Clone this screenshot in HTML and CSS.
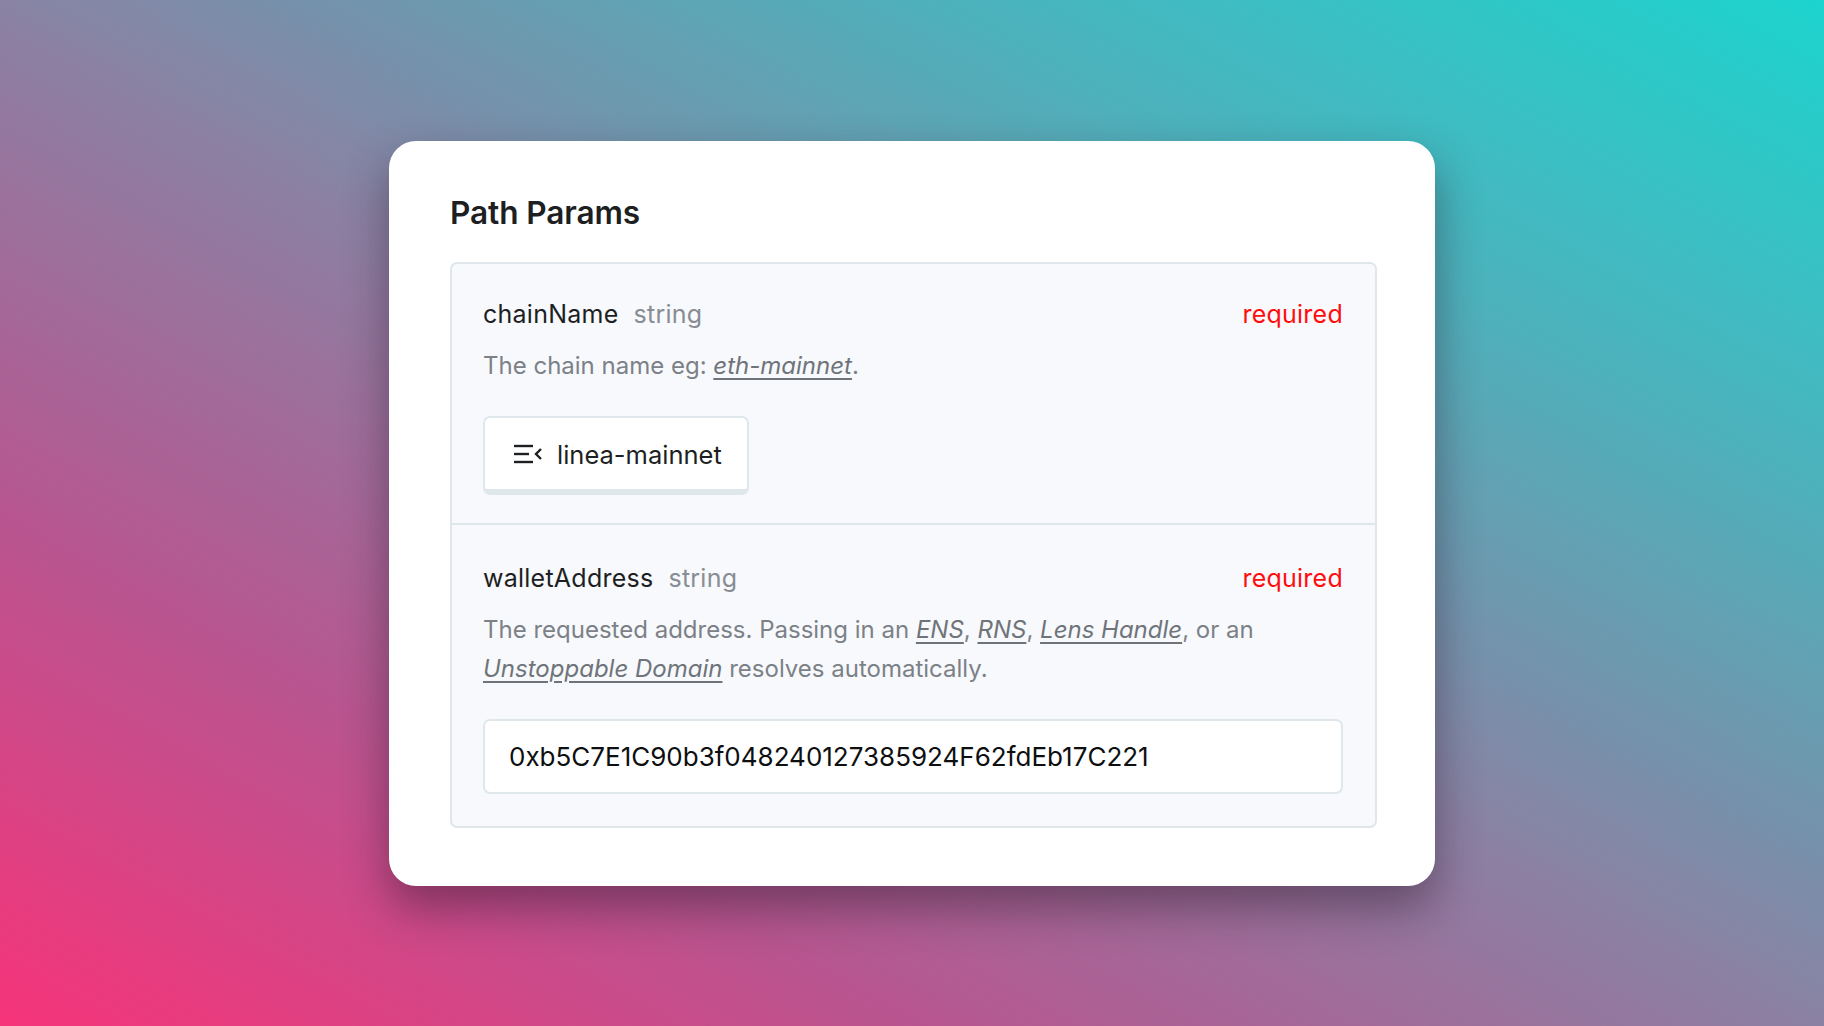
FILE: index.html
```html
<!DOCTYPE html>
<html lang="en">
<head>
<meta charset="utf-8">
<title>Path Params</title>
<link rel="stylesheet" href="styles.css">
</head>
<body>
<div class="stage">
  <section class="card">
    <h2 class="title">Path Params</h2>
    <div class="params">
      <div class="param">
        <div class="param-head">
          <div class="param-name">chainName<span class="param-type">string</span></div>
          <span class="required">required</span>
        </div>
        <p class="desc">The chain name eg: <a class="link">eth-mainnet</a>.</p>
        <button class="select">
          <svg class="select-icon" width="28" height="20" viewBox="0 0 28 20" fill="none" stroke="#1d1f23" stroke-width="2.4" stroke-linecap="butt">
            <line x1="0" y1="2" x2="19" y2="2"/>
            <line x1="0" y1="10" x2="15" y2="10"/>
            <line x1="0" y1="18" x2="19" y2="18"/>
            <polyline points="27,5 22,10 27,15" stroke-linejoin="miter"/>
          </svg>
          <span>linea-mainnet</span>
        </button>
      </div>
      <div class="param">
        <div class="param-head">
          <div class="param-name">walletAddress<span class="param-type">string</span></div>
          <span class="required">required</span>
        </div>
        <p class="desc">The requested address. Passing in an <a class="link">ENS</a>, <a class="link">RNS</a>, <a class="link">Lens Handle</a>, or an <a class="link">Unstoppable Domain</a> resolves automatically.</p>
        <div class="input">0xb5C7E1C90b3f048240127385924F62fdEb17C221</div>
      </div>
    </div>
  </section>
</div>
</body>
</html>
```

FILE: styles.css
```css
* { box-sizing: border-box; }
html, body { margin: 0; padding: 0; }
body {
  font-family: Inter, "Noto Sans", "Liberation Sans", sans-serif;
  background: linear-gradient(29deg, #f7347a 0%, #b85590 25%, #8a82a3 50%, #4fb0bb 75%, #1dd4ce 100%);
  min-height: 1026px;
}
.stage {
  display: flex;
  align-items: center;
  justify-content: center;
  min-height: 1026px;
}
.card {
  width: 1046px;
  background: #ffffff;
  border-radius: 27px;
  padding: 53px 58px 58px 61px;
  box-shadow: 0 22px 45px rgba(40, 20, 40, 0.45);
}
.title {
  margin: 0 0 31px 0;
  font-size: 31.6px;
  line-height: 37px;
  font-weight: 600;
  color: #1d1f23;
  letter-spacing: -0.1px;
}
.params {
  background: #f7f9fc;
  border: 2px solid #dfe7eb;
  border-radius: 7px;
}
.param {
  padding: 32px 32px 28px 31px;
}
.param + .param {
  border-top: 2px solid #dfe7eb;
  padding-top: 35px;
  padding-bottom: 32px;
}
.param-head {
  display: flex;
  justify-content: space-between;
  align-items: baseline;
  font-size: 25px;
  line-height: 36px;
  letter-spacing: 0.25px;
  margin-bottom: 14px;
}
.param-name { color: #1d1f23; }
.param-type {
  color: #888d93;
  margin-left: 15px;
}
.required { color: #ff0d0d; }
.desc {
  margin: 0 0 31px 0;
  font-size: 24px;
  line-height: 39px;
  color: #7c8187;
}
.link {
  font-style: italic;
  text-decoration: underline;
  text-underline-offset: 4px;
  text-decoration-thickness: 1.5px;
  color: #6f747a;
}
.select {
  display: inline-flex;
  align-items: center;
  gap: 15px;
  height: 79px;
  padding: 2px 25px 0 29px;
  background: #ffffff;
  border: 2px solid #dfe7eb;
  border-bottom-width: 6px;
  border-radius: 7px;
  font-family: inherit;
  font-size: 25.5px;
  color: #1d1f23;
}
.select-icon { display: block; }
.input {
  height: 75px;
  display: flex;
  align-items: center;
  padding: 0 24px;
  background: #ffffff;
  border: 2px solid #dfe7eb;
  border-radius: 7px;
  font-size: 26px;
  color: #0d0f11;
}
```
